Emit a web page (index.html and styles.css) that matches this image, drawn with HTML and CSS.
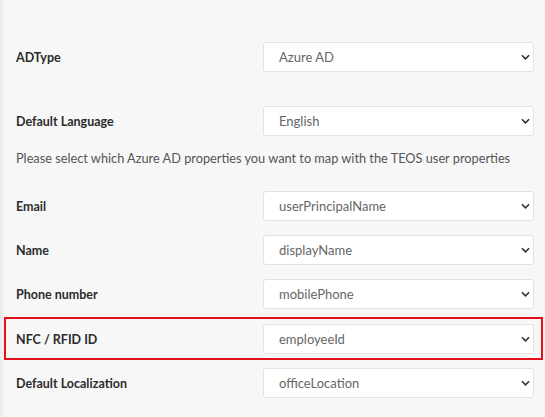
FILE: index.html
```html
<!DOCTYPE html>
<html lang="en">
<head>
<meta charset="utf-8">
<title>Azure AD settings</title>
<link rel="stylesheet" href="styles.css">
</head>
<body>
<main class="form">
  <div class="row row-top">
    <label class="label">ADType</label>
    <div class="select-wrap">
      <select class="select"><option>Azure AD</option></select>
      <svg class="chev" viewBox="0 0 10 6" width="9" height="6"><path d="M1 1 L5 5 L9 1" fill="none" stroke="#333" stroke-width="1.8"/></svg>
    </div>
  </div>
  <div class="row row-lang">
    <label class="label">Default Language</label>
    <div class="select-wrap">
      <select class="select"><option>English</option></select>
      <svg class="chev" viewBox="0 0 10 6" width="9" height="6"><path d="M1 1 L5 5 L9 1" fill="none" stroke="#333" stroke-width="1.8"/></svg>
    </div>
  </div>
  <p class="intro">Please select which Azure AD properties you want to map with the TEOS user properties</p>
  <div class="row row-map row-first">
    <label class="label">Email</label>
    <div class="select-wrap">
      <select class="select"><option>userPrincipalName</option></select>
      <svg class="chev" viewBox="0 0 10 6" width="9" height="6"><path d="M1 1 L5 5 L9 1" fill="none" stroke="#333" stroke-width="1.8"/></svg>
    </div>
  </div>
  <div class="row row-map">
    <label class="label">Name</label>
    <div class="select-wrap">
      <select class="select"><option>displayName</option></select>
      <svg class="chev" viewBox="0 0 10 6" width="9" height="6"><path d="M1 1 L5 5 L9 1" fill="none" stroke="#333" stroke-width="1.8"/></svg>
    </div>
  </div>
  <div class="row row-map">
    <label class="label">Phone number</label>
    <div class="select-wrap">
      <select class="select"><option>mobilePhone</option></select>
      <svg class="chev" viewBox="0 0 10 6" width="9" height="6"><path d="M1 1 L5 5 L9 1" fill="none" stroke="#333" stroke-width="1.8"/></svg>
    </div>
  </div>
  <div class="row row-highlight">
    <label class="label">NFC / RFID ID</label>
    <div class="select-wrap">
      <select class="select"><option>employeeId</option></select>
      <svg class="chev" viewBox="0 0 10 6" width="9" height="6"><path d="M1 1 L5 5 L9 1" fill="none" stroke="#333" stroke-width="1.8"/></svg>
    </div>
  </div>
  <div class="row row-after">
    <label class="label">Default Localization</label>
    <div class="select-wrap">
      <select class="select"><option>officeLocation</option></select>
      <svg class="chev" viewBox="0 0 10 6" width="9" height="6"><path d="M1 1 L5 5 L9 1" fill="none" stroke="#333" stroke-width="1.8"/></svg>
    </div>
  </div>
</main>
</body>
</html>
```

FILE: styles.css
```css
html, body {
  margin: 0;
  padding: 0;
}
body {
  width: 545px;
  height: 417px;
  overflow: hidden;
  background: linear-gradient(to right, #e9e9e9 0, #f7f7f7 5px) #f7f7f7;
  font-family: Lato, "Liberation Sans", sans-serif;
  color: #333;
}
.form {
  display: flex;
  flex-direction: column;
  padding: 42px 11px 0 16px;
}
.row {
  display: flex;
  align-items: center;
}
.label {
  width: 247px;
  flex: none;
  font-size: 12.5px;
  font-weight: 700;
  color: #2b2b2b;
}
.select-wrap {
  position: relative;
  width: 271px;
  height: 30px;
  flex: none;
}
.select {
  appearance: none;
  -webkit-appearance: none;
  box-sizing: border-box;
  width: 100%;
  height: 30px;
  margin: 0;
  padding: 0 24px 0 15px;
  border: 1px solid #e2e2e2;
  border-radius: 3px;
  background: #fff;
  font-family: Lato, "Liberation Sans", sans-serif;
  font-size: 13px;
  color: #666;
  outline: none;
}
.chev {
  position: absolute;
  right: 4px;
  top: 12px;
  pointer-events: none;
}
.row-lang {
  margin-top: 34px;
}
.intro {
  margin: 14px 0 0;
  font-size: 12.75px;
  line-height: 16px;
  color: #555;
}
.row-map {
  margin-top: 14px;
}
.row-first {
  margin-top: 25px;
}
.row-highlight {
  margin: 8px -9px 0 -12px;
  padding: 5px 7px 4px 10px;
  border: 2px solid #e3101c;
}
.row-after {
  margin-top: 8px;
}
```
